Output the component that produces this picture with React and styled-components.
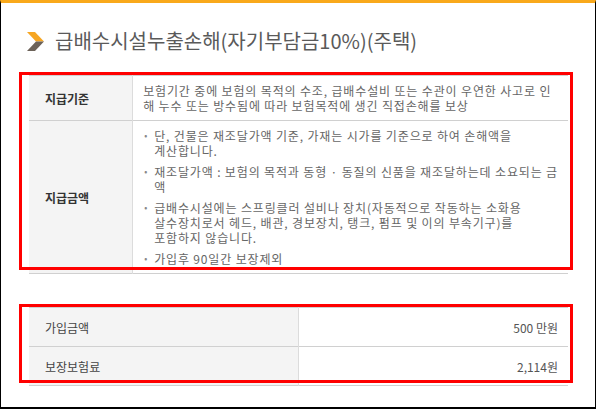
import React from 'react'
import styled, { createGlobalStyle } from 'styled-components'

const GlobalStyle = createGlobalStyle`
    html, body {
        margin: 0;
        padding: 0;
        background: #fff;
    }
    body {
        font-family: "Noto Sans CJK KR", "Noto Sans", sans-serif;
    }
`

const detailRows = [
    {
        label: '지급기준',
        lines: [
            '보험기간 중에 보험의 목적의 수조, 급배수설비 또는 수관이 우연한 사고로 인',
            '해 누수 또는 방수됨에 따라 보험목적에 생긴 직접손해를 보상',
        ],
    },
    {
        label: '지급금액',
        bullets: [
            ['단, 건물은 재조달가액 기준, 가재는 시가를 기준으로 하여 손해액을', '계산합니다.'],
            ['재조달가액 : 보험의 목적과 동형 · 동질의 신품을 재조달하는데 소요되는 금', '액'],
            [
                '급배수시설에는 스프링클러 설비나 장치(자동적으로 작동하는 소화용',
                '살수장치로서 헤드, 배관, 경보장치, 탱크, 펌프 및 이의 부속기구)를',
                '포함하지 않습니다.',
            ],
            ['가입후 90일간 보장제외'],
        ],
    },
]

const priceRows = [
    { label: '가입금액', value: '500 만원' },
    { label: '보장보험료', value: '2,114원' },
]

const Chevron = () => (
    <svg width="17" height="19" viewBox="0 0 17 19">
        <polygon points="0,0 8,0 17,9.5 9,9.5" fill="#f6a623" />
        <polygon points="9,9.5 17,9.5 8,19 0,19" fill="#6c6259" />
    </svg>
)

const App = () => {
    return (
        <>
            <GlobalStyle />
            <Frame>
                <Title>
                    <Chevron />
                    <h2>급배수시설누출손해(자기부담금10%)(주택)</h2>
                </Title>

                <TableWrap>
                    <DetailTable>
                        <tbody>
                            {detailRows.map((row) => (
                                <tr key={row.label}>
                                    <Head>{row.label}</Head>
                                    <Cell>
                                        {row.lines &&
                                            row.lines.map((line, i) => <Line key={i}>{line}</Line>)}
                                        {row.bullets && (
                                            <BulletList>
                                                {row.bullets.map((item, i) => (
                                                    <li key={i}>
                                                        <span className="dot">•</span>
                                                        <div>
                                                            {item.map((line, j) => (
                                                                <Line key={j}>{line}</Line>
                                                            ))}
                                                        </div>
                                                    </li>
                                                ))}
                                            </BulletList>
                                        )}
                                    </Cell>
                                </tr>
                            ))}
                        </tbody>
                    </DetailTable>
                    <Highlight bottom={4} />
                </TableWrap>

                <TableWrap gap={33}>
                    <PriceTable>
                        <tbody>
                            {priceRows.map((row) => (
                                <tr key={row.label}>
                                    <PriceHead>{row.label}</PriceHead>
                                    <PriceValue>{row.value}</PriceValue>
                                </tr>
                            ))}
                        </tbody>
                    </PriceTable>
                    <Highlight bottom={3} />
                </TableWrap>
            </Frame>
        </>
    )
}

const Frame = styled.div`
    box-sizing: border-box;
    width: 596px;
    height: 409px;
    border-top: 3px solid #f9a91b;
    border-left: 1px solid #000;
    border-right: 1px solid #000;
    border-bottom: 2px solid #000;
    padding: 0 27px 0 28px;
    overflow: hidden;
`

const Title = styled.div`
    display: flex;
    align-items: center;
    gap: 11px;
    margin: 25px 0 0 -2px;
    height: 26px;
    h2 {
        margin: 0;
        font-size: 20px;
        font-weight: 400;
        line-height: 26px;
        color: #5a5a5a;
    }
`

const TableWrap = styled.div`
    position: relative;
    margin-top: ${(props) => (props.gap ? props.gap : 21)}px;
`

const Highlight = styled.div`
    position: absolute;
    left: -10px;
    right: -5px;
    top: -3px;
    bottom: ${(props) => props.bottom}px;
    border: 3px solid #f00;
    pointer-events: none;
`

const DetailTable = styled.table`
    width: 100%;
    border-collapse: collapse;
    border-top: 1px solid #d0d0d0;
    border-bottom: 1px solid #d0d0d0;
    tr + tr td, tr + tr th {
        border-top: 1px solid #d0d0d0;
    }
`

const Head = styled.th`
    width: 108px;
    box-sizing: border-box;
    padding: 0 0 0 16px;
    background: #f4f4f4;
    border-right: 1px solid #dcdcdc;
    text-align: left;
    font-size: 12px;
    font-weight: 700;
    color: #333;
    vertical-align: middle;
`

const Cell = styled.td`
    padding: 7px 10px 7px 10px;
    font-size: 12px;
    line-height: 15px;
    letter-spacing: 0.85px;
    color: #666;
    vertical-align: top;
`

const Line = styled.div`
    white-space: nowrap;
`

const BulletList = styled.ul`
    list-style: none;
    margin: 0;
    padding: 0;
    li {
        display: flex;
    }
    li + li {
        margin-top: 6px;
    }
    .dot {
        width: 10px;
        flex: none;
        font-size: 9px;
        color: #888;
        padding-left: 1px;
        letter-spacing: 0;
    }
`

const PriceTable = styled.table`
    width: 100%;
    border-collapse: collapse;
    border-top: 1px solid #d0d0d0;
    border-bottom: 1px solid #d0d0d0;
    tr + tr td, tr + tr th {
        border-top: 1px solid #d0d0d0;
    }
`

const PriceHead = styled.th`
    width: 50%;
    height: 38px;
    padding: 0 0 0 16px;
    background: #f4f4f4;
    border-right: 1px solid #dcdcdc;
    text-align: left;
    font-size: 12px;
    font-weight: 400;
    color: #444;
`

const PriceValue = styled.td`
    height: 38px;
    padding: 0 10px 0 0;
    text-align: right;
    font-size: 12px;
    color: #555;
`

export default App
